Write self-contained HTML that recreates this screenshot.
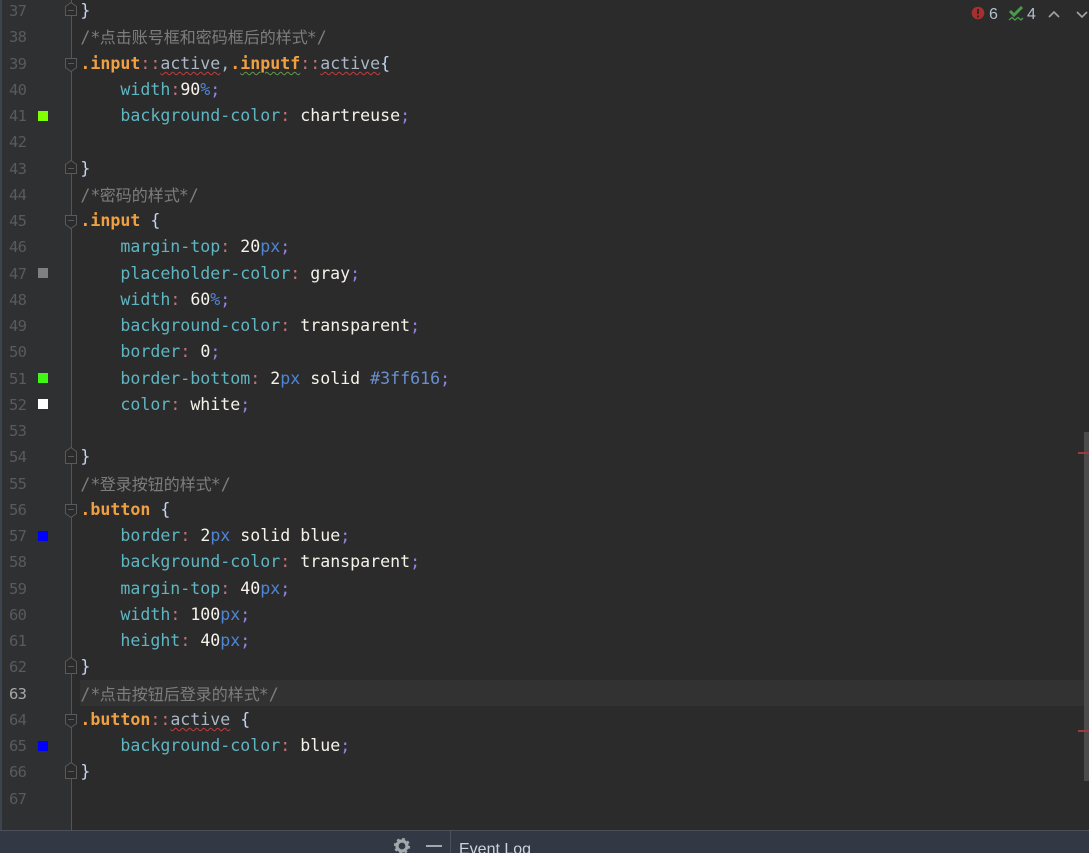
<!DOCTYPE html>
<html lang="zh"><head><meta charset="utf-8"><title>CSS editor</title>
<style>
html,body{margin:0;padding:0;background:#2b2b2b}
#r{position:relative;width:1089px;height:853px;overflow:hidden;background:#2b2b2b;font-family:"DejaVu Sans Mono","Liberation Mono","Noto Sans CJK SC",monospace}
#g{position:absolute;left:0;top:0;width:71px;height:830px;background:#2f3032;border-left:2px solid #3d4450;box-sizing:border-box}
#v{position:absolute;left:71px;top:0;width:1px;height:830px;background:#555}
#cur{position:absolute;left:80px;top:680px;width:1009px;height:26px;background:#323232}
#sb{position:absolute;left:1084px;top:432px;width:5px;height:349px;background:#4b4b4b}
.m{position:absolute;left:1078px;width:11px;height:2px;background:#a03a3a}
.l{position:absolute;left:80.4px;margin-top:1px;white-space:pre;font-size:16.6px;line-height:26px;height:26px;letter-spacing:0;color:#a9b7c6}
.n{position:absolute;left:9px;margin-top:1px;font-size:15.5px;line-height:26px;color:#585b5e;width:20px;letter-spacing:-.7px}
.sw{position:absolute;left:38px;width:10px;height:10px}
.s{color:#f0a040;font-weight:bold}
.p{color:#5fb6c2}
.c{color:#c4727a}
.w{color:#f5f2ea}
.u{color:#4f85d6}
.e{color:#9484e0}
.b{color:#c4d4f2}
.d{color:#a9b7c6}
.q{color:#7d7d7d}
.q i{font:16px "Noto Sans CJK SC",sans-serif;color:#7d7d7d;margin-left:-.6px;margin-right:-1px}
.red{text-decoration:underline wavy #c23b3b 1px;text-underline-offset:2px}
.grn{text-decoration:underline wavy #5f9a4a 1px;text-underline-offset:2px}
#bar{position:absolute;left:0;top:830px;width:1089px;height:23px;background:#323844;border-top:1px solid #4b505b;box-sizing:border-box}
#ev{position:absolute;left:459px;top:840px;font:16px/20px "Liberation Sans",sans-serif;color:#cfd3da;white-space:nowrap}
</style></head><body><div id="r">
<div id="g"></div><div id="cur"></div><div id="v"></div>

<div class="n" style="top:-3px">37</div><div class="n" style="top:23px">38</div><div class="n" style="top:50px">39</div><div class="n" style="top:76px">40</div><div class="n" style="top:102px">41</div><div class="n" style="top:128px">42</div><div class="n" style="top:155px">43</div><div class="n" style="top:181px">44</div><div class="n" style="top:207px">45</div><div class="n" style="top:233px">46</div><div class="n" style="top:260px">47</div><div class="n" style="top:286px">48</div><div class="n" style="top:312px">49</div><div class="n" style="top:338px">50</div><div class="n" style="top:365px">51</div><div class="n" style="top:391px">52</div><div class="n" style="top:417px">53</div><div class="n" style="top:443px">54</div><div class="n" style="top:470px">55</div><div class="n" style="top:496px">56</div><div class="n" style="top:522px">57</div><div class="n" style="top:548px">58</div><div class="n" style="top:575px">59</div><div class="n" style="top:601px">60</div><div class="n" style="top:627px">61</div><div class="n" style="top:653px">62</div><div class="n" style="top:680px;color:#a8a8a8">63</div><div class="n" style="top:706px">64</div><div class="n" style="top:732px">65</div><div class="n" style="top:758px">66</div><div class="n" style="top:785px">67</div>

<div class="sw" style="top:111px;background:#7fff00"></div>
<div class="sw" style="top:268px;background:#808080"></div>
<div class="sw" style="top:373px;background:#3ff616"></div>
<div class="sw" style="top:399px;background:#fff"></div>
<div class="sw" style="top:531px;background:#0000ff"></div>
<div class="sw" style="top:741px;background:#0000ff"></div>

<svg style="position:absolute;left:0;top:0" width="90" height="830" fill="#2b2b2b" stroke="#5a5a5a" stroke-width="1">
<path d="M65.500 6.500L71 2.500L76.500 6.500V15.500H65.500Z"/><path d="M68 10.500H74"/>
<path d="M65.500 164.500L71 160.500L76.500 164.500V173.500H65.500Z"/><path d="M68 168.500H74"/>
<path d="M65.500 451.500L71 447.500L76.500 451.500V463.500H65.500Z"/><path d="M68 456.500H74"/>
<path d="M65.500 661.500L71 657.500L76.500 661.500V673.500H65.500Z"/><path d="M68 666.500H74"/>
<path d="M65.500 766.500L71 762.500L76.500 766.500V778.500H65.500Z"/><path d="M68 771.500H74"/>
<path d="M65.500 58.500H76.500V67.500L71 71.500L65.500 67.500Z"/><path d="M68 63.500H74"/>
<path d="M65.500 215.500H76.500V224.500L71 228.500L65.500 224.500Z"/><path d="M68 220.500H74"/>
<path d="M65.500 504.500H76.500V513.500L71 517.500L65.500 513.500Z"/><path d="M68 509.500H74"/>
<path d="M65.500 714.500H76.500V723.500L71 727.500L65.500 723.500Z"/><path d="M68 719.500H74"/>
</svg>

<div class="l" style="top:-3px"><span class="b">}</span></div>
<div class="l q" style="top:23px">/*<i>点击账号框和密码框后的样式</i>*/</div>
<div class="l" style="top:50px"><span class="s">.input</span><span class="c">::</span><span class="d red">active</span><span class="d">,</span><span class="s">.</span><span class="s grn">inputf</span><span class="c">::</span><span class="d red">active</span><span class="b">{</span></div>
<div class="l" style="top:76px">    <span class="p">width</span><span class="c">:</span><span class="w">90</span><span class="u">%</span><span class="e">;</span></div>
<div class="l" style="top:102px">    <span class="p">background-color</span><span class="c">:</span> <span class="w">chartreuse</span><span class="e">;</span></div>
<div class="l" style="top:155px"><span class="b">}</span></div>
<div class="l q" style="top:181px">/*<i>密码的样式</i>*/</div>
<div class="l" style="top:207px"><span class="s">.input</span> <span class="b">{</span></div>
<div class="l" style="top:233px">    <span class="p">margin-top</span><span class="c">:</span> <span class="w">20</span><span class="u">px</span><span class="e">;</span></div>
<div class="l" style="top:260px">    <span class="p">placeholder-color</span><span class="c">:</span> <span class="w">gray</span><span class="e">;</span></div>
<div class="l" style="top:286px">    <span class="p">width</span><span class="c">:</span> <span class="w">60</span><span class="u">%</span><span class="e">;</span></div>
<div class="l" style="top:312px">    <span class="p">background-color</span><span class="c">:</span> <span class="w">transparent</span><span class="e">;</span></div>
<div class="l" style="top:338px">    <span class="p">border</span><span class="c">:</span> <span class="w">0</span><span class="e">;</span></div>
<div class="l" style="top:365px">    <span class="p">border-bottom</span><span class="c">:</span> <span class="w">2</span><span class="u">px</span> <span class="w">solid</span> <span style="color:#6a8fd0">#3ff616</span><span class="e">;</span></div>
<div class="l" style="top:391px">    <span class="p">color</span><span class="c">:</span> <span class="w">white</span><span class="e">;</span></div>
<div class="l" style="top:443px"><span class="b">}</span></div>
<div class="l q" style="top:470px">/*<i>登录按钮的样式</i>*/</div>
<div class="l" style="top:496px"><span class="s">.button</span> <span class="b">{</span></div>
<div class="l" style="top:522px">    <span class="p">border</span><span class="c">:</span> <span class="w">2</span><span class="u">px</span> <span class="w">solid blue</span><span class="e">;</span></div>
<div class="l" style="top:548px">    <span class="p">background-color</span><span class="c">:</span> <span class="w">transparent</span><span class="e">;</span></div>
<div class="l" style="top:575px">    <span class="p">margin-top</span><span class="c">:</span> <span class="w">40</span><span class="u">px</span><span class="e">;</span></div>
<div class="l" style="top:601px">    <span class="p">width</span><span class="c">:</span> <span class="w">100</span><span class="u">px</span><span class="e">;</span></div>
<div class="l" style="top:627px">    <span class="p">height</span><span class="c">:</span> <span class="w">40</span><span class="u">px</span><span class="e">;</span></div>
<div class="l" style="top:653px"><span class="b">}</span></div>
<div class="l q" style="top:680px">/*<i>点击按钮后登录的样式</i>*/</div>
<div class="l" style="top:706px"><span class="s">.button</span><span class="c">::</span><span class="d red">active</span> <span class="b">{</span></div>
<div class="l" style="top:732px">    <span class="p">background-color</span><span class="c">:</span> <span class="w">blue</span><span class="e">;</span></div>
<div class="l" style="top:758px"><span class="b">}</span></div>

<div id="sb"></div>
<div class="m" style="top:452px"></div>
<div class="m" style="top:730px"></div>

<svg style="position:absolute;left:965px;top:0" width="124" height="28" fill="none">
<circle cx="13" cy="13" r="6.300" fill="#a82f2f"/>
<path d="M13 9V14M13 15.500V17.500" stroke="#2b2b2b" stroke-width="2"/>
<text x="24" y="19" font-family="Liberation Sans,sans-serif" font-size="16" fill="#b4c0cc">6</text>
<path d="M45 11L49 15L57 7" stroke="#4a9a4a" stroke-width="3"/>
<path d="M44 20L47 17.500L50 20L53 17.500L56 20L58 18" stroke="#4a9a4a" stroke-width="1.300"/>
<text x="62" y="19" font-family="Liberation Sans,sans-serif" font-size="16" fill="#b4c0cc">4</text>
<path d="M84 17L89 12L94 17" stroke="#a0a4a8" stroke-width="1.600"/>
<path d="M112 12L117 17L122 12" stroke="#a0a4a8" stroke-width="1.600"/>
</svg>

<div id="bar"></div>
<div style="position:absolute;left:450px;top:830px;width:1px;height:23px;background:#4b505b"></div>
<svg style="position:absolute;left:390px;top:836px" width="56" height="17" fill="none">
<circle cx="12" cy="10" r="5" stroke="#a4a7ab" stroke-width="3.200"/>
<circle cx="12" cy="10" r="7.200" stroke="#a4a7ab" stroke-width="1.800" stroke-dasharray="2.800 2.850"/>
<path d="M36 10H52" stroke="#a4a7ab" stroke-width="2"/>
</svg>
<div id="ev">Event Log</div>
</div></body></html>
